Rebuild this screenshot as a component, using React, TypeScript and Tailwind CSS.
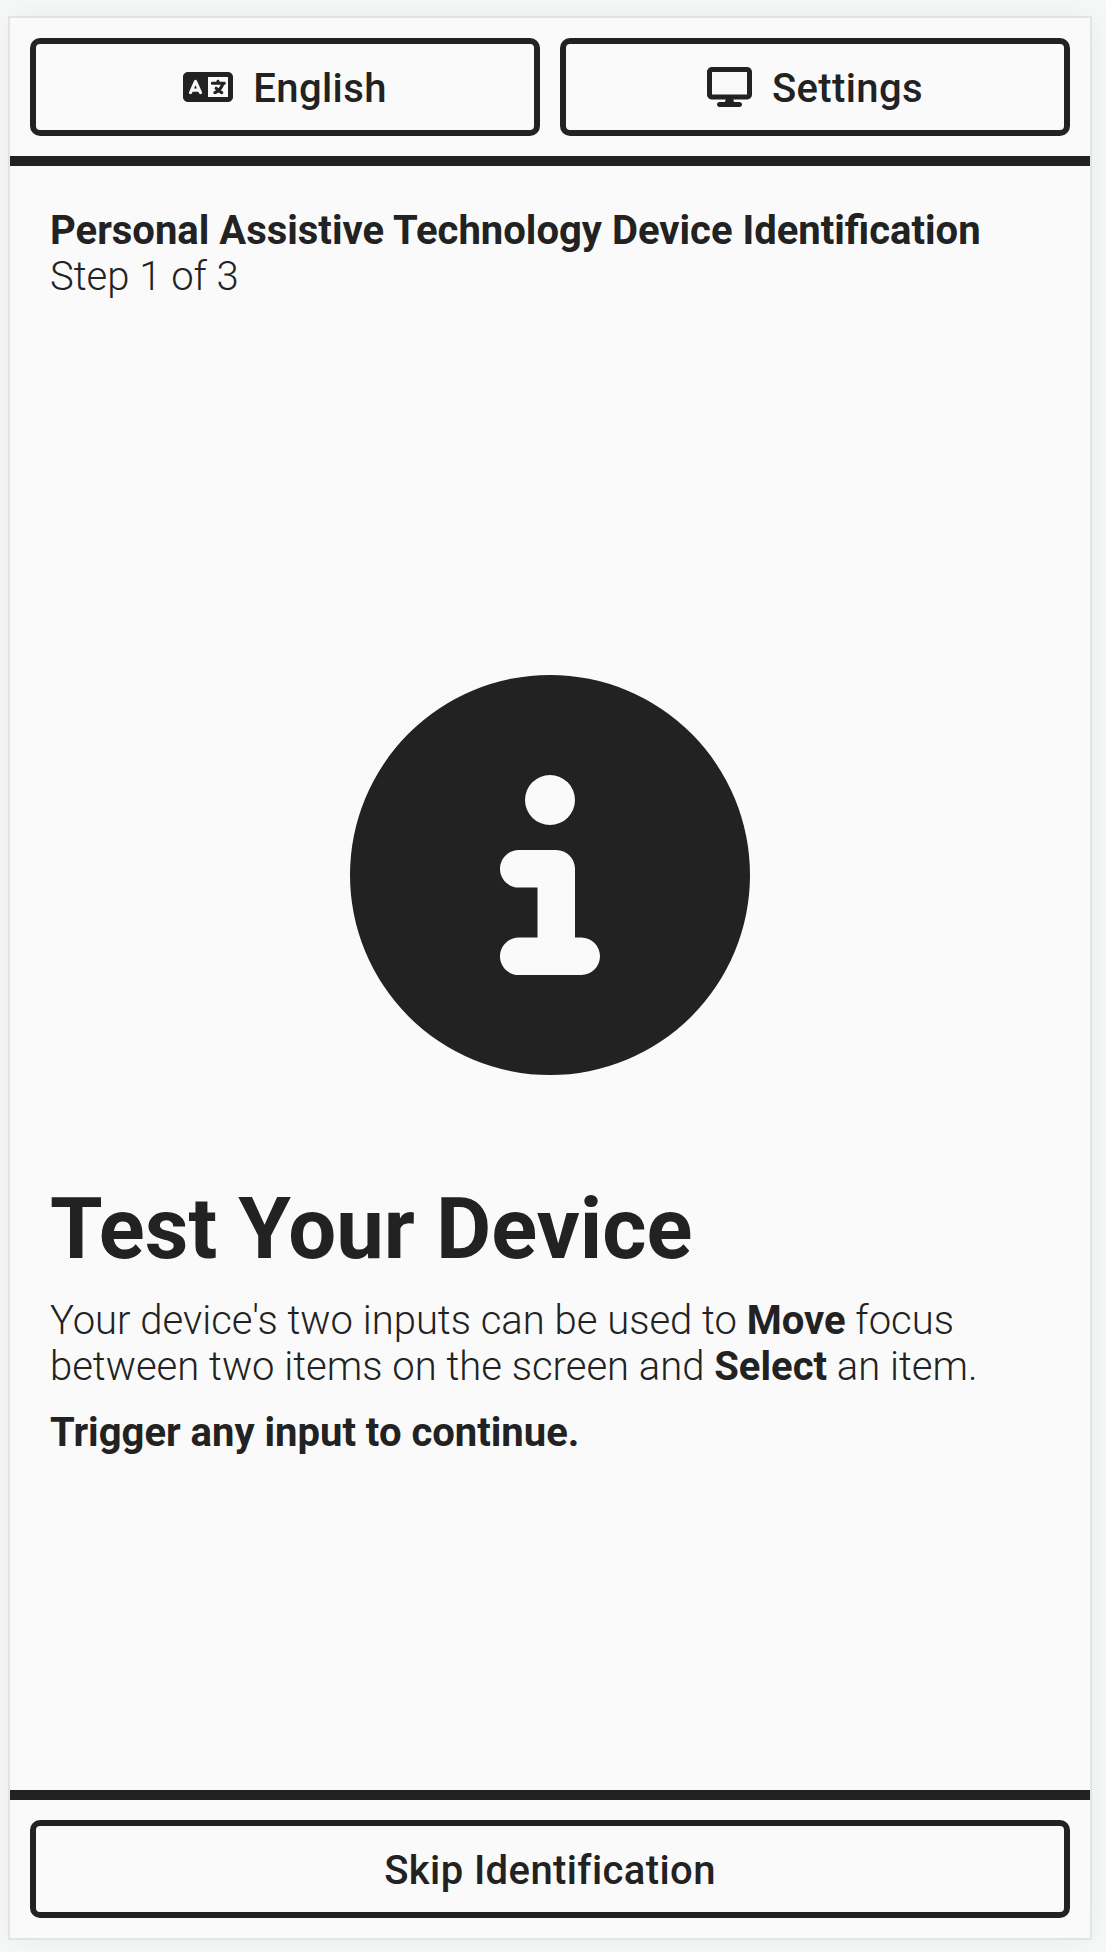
import type { ReactNode } from 'react';
import { FaCircleInfo, FaDisplay, FaLanguage } from 'react-icons/fa6';

function Button({ icon, children }: { icon?: ReactNode; children: ReactNode }) {
  return (
    <button
      type="button"
      className="flex h-[98px] min-w-0 flex-1 items-center justify-center gap-5 rounded-[10px] border-[6px] border-[#222222] text-[40px] leading-[46px] font-medium tracking-[0.4px] whitespace-nowrap"
    >
      {icon}
      <span className="pt-[3px]">{children}</span>
    </button>
  );
}

export default function App() {
  return (
    <div className="h-[1952px] w-[1106px] overflow-hidden bg-[#f6f9f8] pt-4 pl-2 font-[Roboto,sans-serif] text-[#222222]">
      <div className="flex h-[1924px] w-[1084px] flex-col border-2 border-[#e2e3e3] bg-[#fafafa] shadow-[0_0_32px_rgba(0,0,0,0.06)]">
        <header className="flex gap-5 border-b-[10px] border-[#222222] p-5">
          <Button icon={<FaLanguage className="h-10 w-[50px]" />}>English</Button>
          <Button icon={<FaDisplay className="h-10 w-[45px]" />}>Settings</Button>
        </header>
        <main className="flex flex-1 flex-col px-10 pt-[42px] text-[40px] leading-[46px] font-light">
          <div>
            <div className="font-bold">Personal Assistive Technology Device Identification</div>
            <div>Step 1 of 3</div>
          </div>
          <FaCircleInfo className="mt-[375px] size-[400px] self-center" />
          <h1 className="mt-[106px] text-[85px] leading-[96px] font-bold">Test Your Device</h1>
          <p className="mt-[21px]">
            Your device's two inputs can be used to <b className="font-bold">Move</b> focus
            <br />
            between two items on the screen and <b className="font-bold">Select</b> an item.
          </p>
          <p className="mt-5 font-bold">Trigger any input to continue.</p>
        </main>
        <footer className="flex border-t-[10px] border-[#222222] p-5">
          <Button>Skip Identification</Button>
        </footer>
      </div>
    </div>
  );
}
